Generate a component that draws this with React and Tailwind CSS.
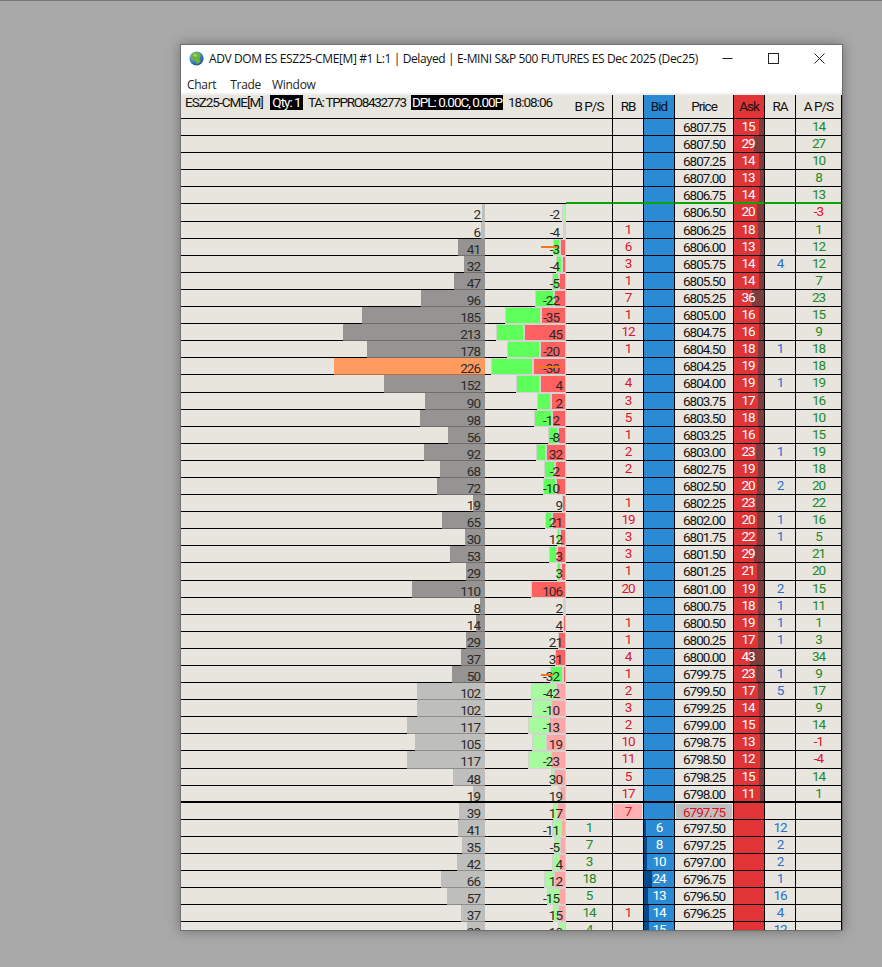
import React from "react";

// price, vol, volW, delta, green, red, bps, rb, bid, ask, ra, aps
const rows = [
  ["6807.75", "", 0, "", 0, 0, "", "", "", 15, "", 14],
  ["6807.50", "", 0, "", 0, 0, "", "", "", 29, "", 27],
  ["6807.25", "", 0, "", 0, 0, "", "", "", 14, "", 10],
  ["6807.00", "", 0, "", 0, 0, "", "", "", 13, "", 8],
  ["6806.75", "", 0, "", 0, 0, "", "", "", 14, "", 13],
  ["6806.50", 2, 3, -2, 2, 0, "", "", "", 20, "", -3],
  ["6806.25", 6, 4, -4, 0, 0, "", 1, "", 18, "", 1],
  ["6806.00", 41, 27, -3, 5, 4, "", 6, "", 13, "", 12],
  ["6805.75", 32, 21, -4, 4, 2, "", 3, "", 14, 4, 12],
  ["6805.50", 47, 31, -5, 5, 5, "", 1, "", 14, "", 7],
  ["6805.25", 96, 64, -22, 17, 10, "", 7, "", 36, "", 23],
  ["6805.00", 185, 123, -35, 34, 23, "", 1, "", 16, "", 15],
  ["6804.75", 213, 142, 45, 26, 40, "", 12, "", 16, "", 9],
  ["6804.50", 178, 118, -20, 31, 24, "", 1, "", 18, 1, 18],
  ["6804.25", 226, 151, -30, 40, 31, "", "", "", 19, "", 18],
  ["6804.00", 152, 101, 4, 22, 24, "", 4, "", 19, 1, 19],
  ["6803.75", 90, 60, 2, 12, 13, "", 3, "", 17, "", 16],
  ["6803.50", 98, 65, -12, 16, 12, "", 5, "", 18, "", 10],
  ["6803.25", 56, 37, -8, 8, 6, "", 1, "", 16, "", 15],
  ["6803.00", 92, 61, 32, 8, 18, "", 2, "", 23, 1, 19],
  ["6802.75", 68, 45, -2, 9, 9, "", 2, "", 19, "", 18],
  ["6802.50", 72, 48, -10, 11, 8, "", "", "", 20, 2, 20],
  ["6802.25", 19, 12, 9, 0, 2, "", 1, "", 23, "", 22],
  ["6802.00", 65, 43, 21, 5, 12, "", 19, "", 20, 1, 16],
  ["6801.75", 30, 20, 12, 1, 4, "", 3, "", 22, 1, 5],
  ["6801.50", 53, 35, 3, 6, 7, "", 3, "", 29, "", 21],
  ["6801.25", 29, 19, 3, 2, 3, "", 1, "", 21, "", 20],
  ["6801.00", 110, 73, 106, 0, 33, "", 20, "", 19, 2, 15],
  ["6800.75", 8, 5, 2, 0, 0, "", "", "", 18, 1, 11],
  ["6800.50", 14, 9, 4, 0, 1, "", 1, "", 19, 1, 1],
  ["6800.25", 29, 19, 21, 0, 6, "", 1, "", 17, 1, 3],
  ["6800.00", 37, 24, 31, 0, 9, "", 4, "", 43, "", 34],
  ["6799.75", 50, 33, -32, 11, 1, "", 1, "", 23, 1, 9],
  ["6799.50", 102, 68, -42, 24, 8, "", 2, "", 17, 5, 17],
  ["6799.25", 102, 68, -10, 18, 13, "", 3, "", 14, "", 9],
  ["6799.00", 117, 78, -13, 20, 15, "", 2, "", 15, "", 14],
  ["6798.75", 105, 70, 19, 13, 18, "", 10, "", 13, "", -1],
  ["6798.50", 117, 78, -23, 22, 13, "", 11, "", 12, "", -4],
  ["6798.25", 48, 32, 30, 2, 10, "", 5, "", 15, "", 14],
  ["6798.00", 19, 12, 19, 1, 4, "", 17, "", 11, "", 1],
  ["6797.75", 39, 26, 17, 3, 7, "", 7, "", "", "", ""],
  ["6797.50", 41, 27, -11, 8, 3, 1, "", 6, "", 12, ""],
  ["6797.25", 35, 23, -5, 5, 4, 7, "", 8, "", 2, ""],
  ["6797.00", 42, 28, 4, 6, 5, 3, "", 10, "", 2, ""],
  ["6796.75", 66, 44, 12, 9, 10, 18, "", 24, "", 1, ""],
  ["6796.50", 57, 38, -15, 11, 5, 5, "", 13, "", 16, ""],
  ["6796.25", 37, 24, 15, 4, 6, 14, 1, 14, "", 4, ""],
  ["", 28, 18, 10, 6, 0, 4, "", 15, "", 12, ""],
];

// order marks drawn over the delta text: width and distance from the right edge
const marks = { "6806.00": "w-[16px] mr-[9px]", "6804.25": "w-[26px] mr-[5px]", "6799.75": "w-[12px] mr-[13px]" };

const colClass = "grid grid-cols-[304px_81px_47px_31px_31px_59px_31px_31px_46px]";
const stack = "grid grid-cols-1 grid-rows-1 min-w-0 h-full overflow-hidden";
const layer = "col-start-1 row-start-1";

const Globe = () => (
  <svg width="15" height="15" viewBox="0 0 16 16">
    <defs>
      <radialGradient id="sea" cx="35%" cy="30%" r="75%">
        <stop offset="0%" stopColor="#b9e0f5" />
        <stop offset="55%" stopColor="#3d86c9" />
        <stop offset="100%" stopColor="#1c4f8e" />
      </radialGradient>
    </defs>
    <circle cx="8" cy="8" r="7.5" fill="url(#sea)" />
    <path d="M3 3.5 C5 1.5 9 1 11 2 C12.5 3 13 5 12 6.5 C10.5 8 11 10 12.5 10.5 C12 12.5 10 14 8 13.5 C7.5 11.5 7 10 5 9.5 C3 9 1.5 7 3 3.5Z" fill="#6fb23a" />
    <path d="M4 4 C6 3 8 3.5 9 5 C8 6.5 5.5 6.5 4 4Z" fill="#a9d45b" />
  </svg>
);

const WinControls = () => (
  <div className="flex h-full shrink-0">
    <div className="w-[46px] flex items-center justify-center">
      <svg width="11" height="11" viewBox="0 0 11 11"><path d="M0.5 5.5H10.5" stroke="#222" /></svg>
    </div>
    <div className="w-[46px] flex items-center justify-center">
      <svg width="11" height="11" viewBox="0 0 11 11"><rect x="0.5" y="0.5" width="10" height="10" fill="none" stroke="#222" /></svg>
    </div>
    <div className="w-[46px] flex items-center justify-center">
      <svg width="11" height="11" viewBox="0 0 11 11"><path d="M0.5 0.5L10.5 10.5M10.5 0.5L0.5 10.5" stroke="#222" /></svg>
    </div>
  </div>
);

const Row = ({ row, index }) => {
  const [price, vol, volW, delta, g, r, bps, rb, bid, ask, ra, aps] = row;
  const heavy = price === "6798.00";
  const greenLine = price === "6806.75";
  const inside = price === "6797.75";
  const light = index >= 33 || index === 5 || index === 6;
  const orange = vol === 226;

  const line = heavy ? "border-b-2 border-black" : "border-b border-black";
  const right = greenLine ? "border-b-2 border-b-[#0aa50a]" : line;

  const barColor = orange ? "bg-[#ff9b5e]" : light ? "bg-[#bebebc]" : "bg-[#959492]";
  const barLine = heavy ? "border-black" : orange ? "border-[#c96a3a]" : light ? "border-[#8d8d8b]" : "border-[#6f6e6c]";
  const greenBar = light ? "bg-[#a5fb9d]" : "bg-[#5dff58]";
  const redBar = light ? "bg-[#ffa6a6]" : "bg-[#ff6060]";
  const hasDelta = delta !== "";
  const neg = hasDelta && delta < 0;

  return (
    <div className={colClass + " grid-rows-[17.1px] h-[17.1px] text-[13.5px] leading-[15px] tracking-[-1px]"}>
      <div className={stack}>
        <div className={layer + " flex h-full"}>
          <div className={"flex-1 " + line}></div>
          <div className={"h-full border-b " + barColor + " " + barLine + (heavy ? " border-b-2" : "")} style={{ width: volW }}></div>
        </div>
        <div className={layer + " text-right pr-[5px] text-[#2b2b2b] pt-[3px]"}>{vol}</div>
      </div>
      <div className={stack}>
        <div className={layer + " flex h-full"}>
          <div className={"flex-1 " + line}></div>
          {hasDelta && (
            <div className={"flex justify-end bg-[#d2d2d0] p-[1px] " + (light ? "gap-[1px] " : "gap-[2px] ") + (heavy ? "border-b-2 border-black" : "")}>
              {g > 0 && <div className={"h-full " + greenBar} style={{ width: g }}></div>}
              {r > 0 && <div className={"h-full " + redBar} style={{ width: r }}></div>}
              {g === 0 && r === 0 && <div className="w-[1px]"></div>}
            </div>
          )}
        </div>
        <div className={layer + " text-right text-[#2b2b2b] pt-[3px] " + (neg ? "pr-[7px]" : "pr-[4px]")}>{delta}</div>
        {marks[price] && <div className={layer + " justify-self-end self-center h-[2px] bg-[#f07818] " + marks[price]}></div>}
      </div>
      <div className={"text-center text-[#22892a] border-r border-r-black " + right}>{bps}</div>
      <div className={"border-r border-r-black " + right + (inside ? " p-[1px] pb-0" : "")}>
        <div className={"h-full text-center text-[#dc1430] " + (inside ? "bg-[#ffb0b0]" : "")}>{rb}</div>
      </div>
      <div className={stack + " bg-[#2a8bd4] border-r border-r-black " + right}>
        {bid !== "" && <div className={layer + " h-full bg-[#05498c]"} style={{ width: Math.round(bid / 3) }}></div>}
        <div className={layer + " text-center text-white"}>{bid}</div>
      </div>
      <div className={"border-r border-r-black " + right + (inside ? " p-[1px] pb-0" : "")}>
        <div className={"h-full text-center pt-[1px] " + (inside ? "bg-[#c0c0c0] text-[#e01020]" : "text-[#151515]")}>{price}</div>
      </div>
      <div className={stack + " bg-[#e03436] border-r border-r-black " + right}>
        {ask !== "" && <div className={layer + " h-full justify-self-end bg-[#7e3c3e]"} style={{ width: Math.round(ask / 3) }}></div>}
        <div className={layer + " text-center text-white pr-[2px]"}>{ask}</div>
      </div>
      <div className={"text-center text-[#2a6fd0] border-r border-r-black " + right}>{ra}</div>
      <div className={"text-center border-r border-r-black " + right + (aps < 0 ? " text-[#e81028]" : " text-[#22892a]")}>{aps}</div>
    </div>
  );
};

const App = () => {
  return (
    <div className="h-[967px] overflow-hidden bg-[#a9a9a9] border-t border-t-[#787878] pt-[43px] pl-[180px] font-['Roboto',sans-serif]">
      <div className="w-[663px] h-[887px] bg-white border border-[#6e6e6e] shadow-[0_0_12px_rgba(0,0,0,0.35)] overflow-hidden flex flex-col">
        <div className="h-[27px] flex items-center shrink-0 font-['Open_Sans',sans-serif] text-[12px] tracking-[-0.38px] text-[#111]">
          <div className="pl-[8px] pr-[5px] shrink-0"><Globe /></div>
          <div className="flex-1 min-w-0 whitespace-nowrap">{"ADV DOM ES ESZ25-CME[M] #1 L:1 | Delayed | E-MINI S&P 500 FUTURES ES Dec 2025 (Dec25)"}</div>
          <WinControls />
        </div>
        <div className="h-[21px] flex items-center shrink-0 pl-[6px] pt-[4px] gap-[14px] font-['Open_Sans',sans-serif] text-[12px] tracking-[-0.3px] text-[#222]">
          <span>Chart</span>
          <span>Trade</span>
          <span className="-ml-[3px]">Window</span>
        </div>
        <div className="h-[2px] bg-[#f0f0f0] shrink-0"></div>
        <div className={colClass + " h-[24px] shrink-0 bg-[#e8e5de] text-[13.5px] tracking-[-1px] text-[#111]"}>
          <div className="col-span-2 flex items-start border-b border-black whitespace-nowrap pl-[4px] leading-[15px]">
            <span className="w-[85px]">ESZ25-CME[M]</span>
            <span className="w-[33px] bg-black text-white text-center">Qty: 1</span>
            <span className="w-[108px] pl-[5px] tracking-[-1.3px]">TA: TPPRO8432773</span>
            <span className="w-[92px] bg-black text-white text-center">DPL: 0.00C, 0.00P</span>
            <span className="pl-[5px]">18:08:06</span>
          </div>
          <div className="flex items-center justify-center border-b border-r border-black">B P/S</div>
          <div className="flex items-center justify-center border-b border-r border-black">RB</div>
          <div className="flex items-center justify-center border-b border-r border-black bg-[#2a8bd4]">Bid</div>
          <div className="flex items-center justify-center border-b border-r border-black">Price</div>
          <div className="flex items-center justify-center border-b border-r border-black bg-[#e03436]">Ask</div>
          <div className="flex items-center justify-center border-b border-r border-black">RA</div>
          <div className="flex items-center justify-center border-b border-r border-black">A P/S</div>
        </div>
        <div className="flex-1 min-h-0 overflow-hidden bg-[#e8e5de]">
          {rows.map((row, i) => (
            <Row key={i} row={row} index={i} />
          ))}
        </div>
      </div>
    </div>
  );
};

export default App;
